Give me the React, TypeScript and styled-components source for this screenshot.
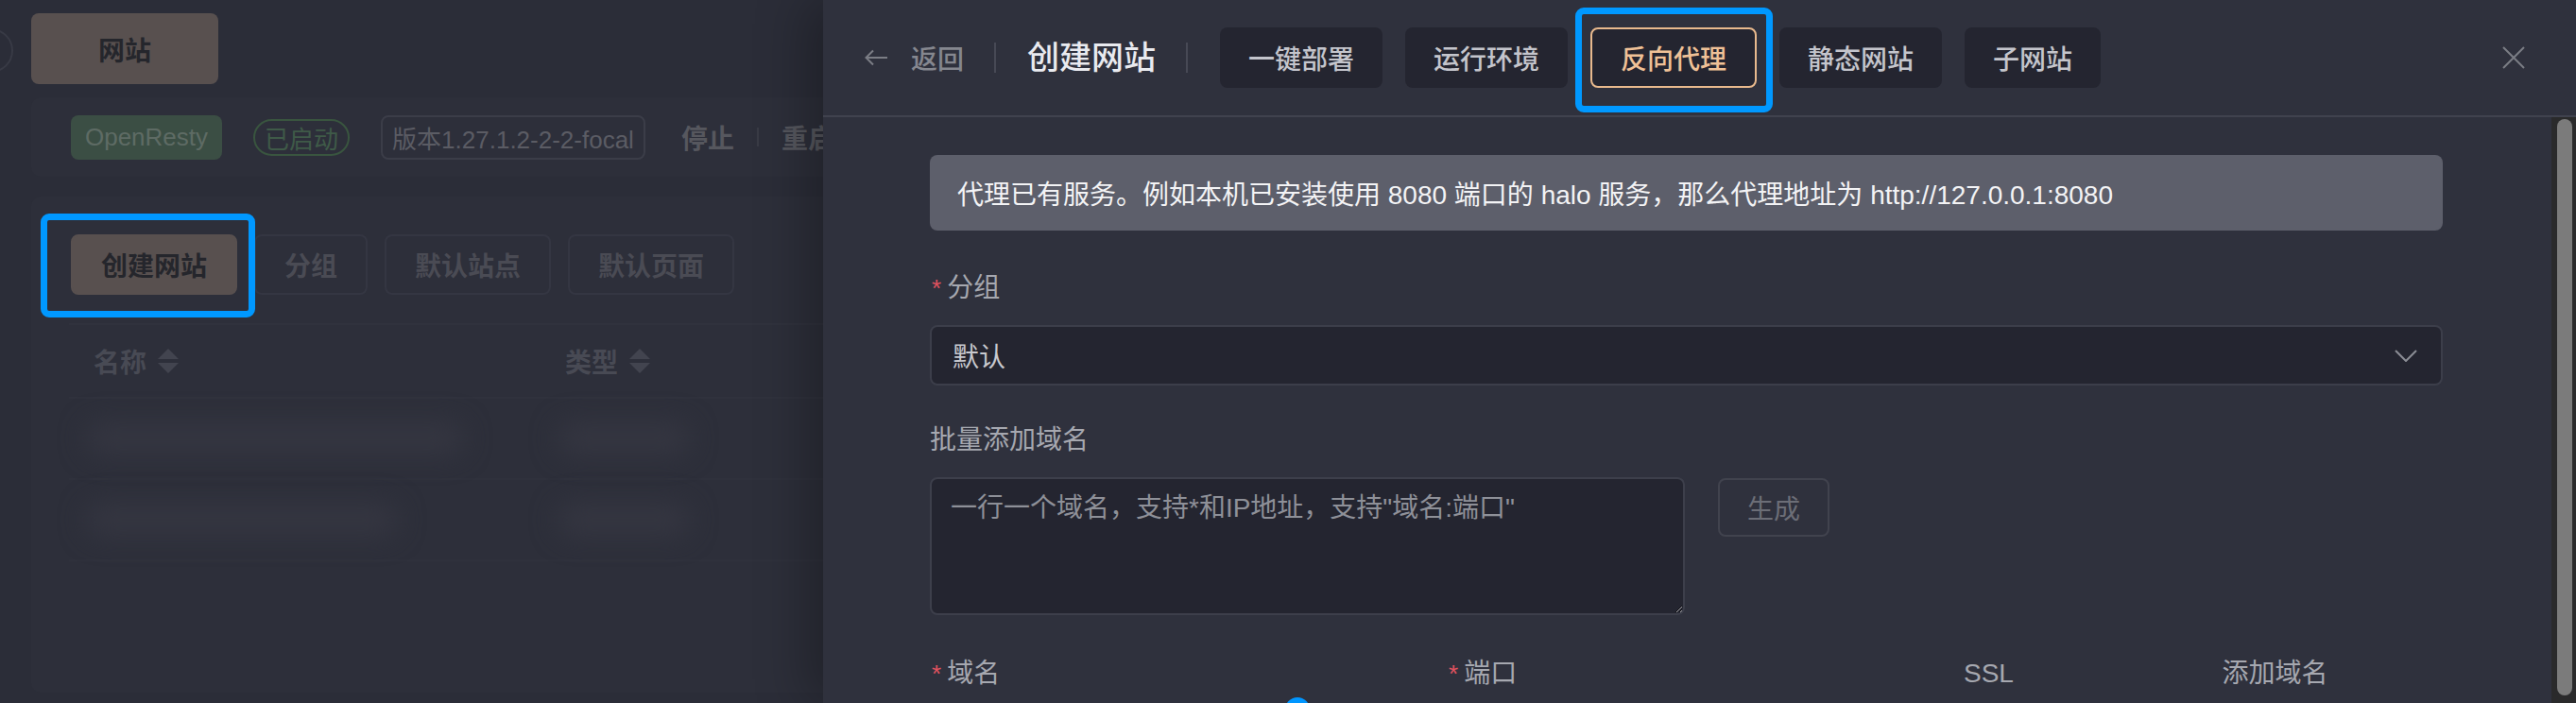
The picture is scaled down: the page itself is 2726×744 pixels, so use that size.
import React from 'react';
import styled, { createGlobalStyle } from 'styled-components';

const GlobalStyle = createGlobalStyle`
  html, body { margin: 0; padding: 0; width: 2726px; height: 744px; overflow: hidden; background: #2b2d38; }
  body { font-family: "Helvetica Neue", Helvetica, "Liberation Sans", "Noto Sans CJK SC", sans-serif; }
  * { box-sizing: border-box; }
`;

const Page = styled.div`
  position: relative;
  width: 2726px;
  height: 744px;
  overflow: hidden;
  background: #2b2d38;
`;

const Main = styled.main`
  display: flex;
  flex-direction: column;
  align-items: flex-start;
  padding: 14px 0 0 33px;
  width: 2700px;
`;

const EdgeToggle = styled.div`
  position: absolute;
  left: -33px;
  top: 30px;
  width: 47px;
  height: 47px;
  border-radius: 50%;
  border: 2px solid #383a45;
`;

const TopButton = styled.div`
  width: 198px;
  height: 75px;
  border-radius: 8px;
  background: #58504f;
  color: #25262c;
  font-size: 28px;
  font-weight: 700;
  display: flex;
  align-items: center;
  justify-content: center;
  margin-bottom: 14px;
`;

const Card = styled.section<{ $h: number; $mb?: number }>`
  width: 2600px;
  height: ${(p) => p.$h}px;
  background: #2d2f3a;
  border-radius: 10px;
  margin-bottom: ${(p) => p.$mb ?? 0}px;
`;

const StatusRow = styled.div`
  display: flex;
  align-items: center;
  height: 100%;
  padding-left: 42px;
  gap: 33px;
`;

const TagGreen = styled.span`
  width: 160px;
  height: 47px;
  border-radius: 8px;
  background: #3b4e44;
  color: #5e6b64;
  font-size: 26px;
  display: flex;
  align-items: center;
  justify-content: center;
`;

const PillTag = styled.span`
  width: 102px;
  height: 39px;
  border-radius: 20px;
  border: 2px solid #39553f;
  color: #3f5a48;
  font-size: 26px;
  display: flex;
  align-items: center;
  justify-content: center;
`;

const OutlineTag = styled.span`
  width: 280px;
  height: 47px;
  border-radius: 8px;
  border: 2px solid #3b3d48;
  color: #5b5c64;
  font-size: 26px;
  display: flex;
  align-items: center;
  justify-content: center;
`;

const TextAction = styled.span`
  font-size: 28px;
  font-weight: 700;
  color: #56575e;
`;

const ActionGroup = styled.div`
  display: flex;
  align-items: center;
  gap: 24px;
  margin-left: 5px;
`;

const SmallDivider = styled.span`
  width: 2px;
  height: 20px;
  background: #393b45;
`;

const ListInner = styled.div`
  padding: 40px 0 0 40px;
  display: flex;
  flex-direction: column;
`;

const ButtonRow = styled.div`
  display: flex;
  gap: 18px;
  padding-left: 2px;
  margin-bottom: 30px;
`;

const PageButton = styled.div<{ $primary?: boolean }>`
  height: 64px;
  padding: 0 30px;
  border-radius: 8px;
  font-size: 28px;
  font-weight: 700;
  display: flex;
  align-items: center;
  background: ${(p) => (p.$primary ? '#58504f' : 'transparent')};
  border: 2px solid ${(p) => (p.$primary ? '#58504f' : '#343642')};
  color: ${(p) => (p.$primary ? '#25262c' : '#4a4b54')};
`;

const Table = styled.div`
  width: 2500px;
  display: grid;
  grid-template-columns: 499px 499px 1fr;
`;

const HeadCell = styled.div`
  height: 80px;
  display: flex;
  align-items: center;
  gap: 12px;
  padding-left: 26px;
  background: #2d2f3a;
  border-top: 2px solid #30323d;
  border-bottom: 2px solid #30323d;
  color: #484a54;
  font-size: 28px;
  font-weight: 700;
`;

const BodyCell = styled.div`
  height: 86px;
  display: flex;
  align-items: center;
  padding-left: 18px;
  border-bottom: 2px solid #2f313c;
`;

const Blob = styled.div<{ $w: number }>`
  width: ${(p) => p.$w}px;
  height: 34px;
  border-radius: 17px;
  background: #353641;
  filter: blur(14px);
`;

const Annotation = styled.div<{ $x: number; $y: number; $w: number; $h: number }>`
  position: absolute;
  left: ${(p) => p.$x}px;
  top: ${(p) => p.$y}px;
  width: ${(p) => p.$w}px;
  height: ${(p) => p.$h}px;
  border: 7px solid #0098ff;
  border-radius: 9px;
  pointer-events: none;
  z-index: 5;
`;

/* Drawer */
const Drawer = styled.aside`
  position: absolute;
  top: 0;
  right: 0;
  width: 1855px;
  height: 744px;
  background: #2f313d;
  box-shadow: -18px 0 50px rgba(0, 0, 0, 0.28);
  display: flex;
  flex-direction: column;
`;

const Header = styled.header`
  height: 124px;
  flex: none;
  display: flex;
  align-items: center;
  padding: 0 54px 0 44px;
  border-bottom: 2px solid #40424e;
`;

const Back = styled.div`
  display: flex;
  align-items: center;
  gap: 25px;
  color: #85878f;
  font-size: 28px;
  font-weight: 500;
`;

const HeadDivider = styled.span<{ $ml: number; $mr: number }>`
  width: 2px;
  height: 32px;
  background: #474955;
  margin: 0 ${(p) => p.$mr}px 0 ${(p) => p.$ml}px;
`;

const Title = styled.h1`
  margin: 0;
  font-size: 34px;
  font-weight: 500;
  color: #e9eaef;
  line-height: 1;
`;

const Tabs = styled.nav`
  display: flex;
  gap: 24px;
`;

const Tab = styled.div<{ $active?: boolean }>`
  height: 64px;
  padding: 0 30px;
  border-radius: 8px;
  background: #242530;
  display: flex;
  align-items: center;
  font-size: 28px;
  font-weight: 500;
  color: ${(p) => (p.$active ? '#efc197' : '#c4c5cc')};
  border: ${(p) => (p.$active ? '2px solid #e8b98d' : 'none')};
`;

const Spacer = styled.div`
  flex: 1;
`;

const CloseBtn = styled.div`
  width: 24px;
  height: 24px;
  display: flex;
`;

const Body = styled.div`
  flex: 1;
  display: flex;
  justify-content: space-between;
  position: relative;
`;

const Content = styled.div`
  width: 1714px;
  padding: 40px 0 0 113px;
`;

const ScrollTrack = styled.div`
  width: 26px;
  background: #2a2a2b;
  padding: 2px 4px 16px 6px;
  display: flex;
`;

const ScrollThumb = styled.div`
  flex: 1;
  border-radius: 8px;
  background: #7b7b7b;
`;

const Alert = styled.div`
  height: 80px;
  border-radius: 8px;
  background: #5d5f6b;
  color: #f3f3f5;
  font-size: 28px;
  display: flex;
  align-items: center;
  padding: 0 29px;
  margin-bottom: 39px;
`;

const FormItem = styled.div<{ $mb: number }>`
  margin-bottom: ${(p) => p.$mb}px;
`;

const Label = styled.div<{ $mb?: number }>`
  height: 44px;
  line-height: 44px;
  font-size: 28px;
  color: #a6a8b0;
  margin-bottom: ${(p) => p.$mb ?? 17}px;
`;

const Star = styled.span`
  color: #e0525f;
  margin-right: 6px;
  margin-left: 2px;
  font-size: 26px;
`;

const Select = styled.div`
  height: 64px;
  border: 2px solid #3c3e4a;
  border-radius: 8px;
  background: #242530;
  display: flex;
  align-items: center;
  justify-content: space-between;
  padding: 0 25px 0 22px;
  color: #c8c9cf;
  font-size: 28px;
`;

const TextRow = styled.div`
  display: flex;
  align-items: flex-start;
  gap: 35px;
`;

const TextArea = styled.textarea`
  width: 799px;
  height: 146px;
  border: 2px solid #3d3f4b;
  border-radius: 8px;
  background: #242530;
  color: #c8c9cf;
  font-family: inherit;
  font-size: 28px;
  line-height: 40px;
  padding: 11px 20px;
  resize: vertical;
  outline: none;
  color-scheme: dark;
  &::placeholder {
    color: #8e9098;
  }
`;

const GenButton = styled.div`
  width: 118px;
  height: 62px;
  border: 2px solid #41434e;
  border-radius: 8px;
  color: #6c6e77;
  font-size: 28px;
  display: flex;
  align-items: center;
  justify-content: center;
  margin-top: 1px;
`;

const ColRow = styled.div`
  display: grid;
  grid-template-columns: 2fr 2fr 1fr 1fr;
  margin: 0 -20px;
`;

const Col = styled.div`
  padding: 0 20px;
`;

const BlueDot = styled.div`
  position: absolute;
  left: 489px;
  top: 614px;
  width: 26px;
  height: 26px;
  border-radius: 50%;
  background: #0096ff;
`;

const Caret = () => (
  <svg width="22" height="26" viewBox="0 0 22 26">
    <path d="M11 0 L22 11 H0 Z" fill="#42444f" />
    <path d="M0 15 H22 L11 26 Z" fill="#42444f" />
  </svg>
);

const ArrowLeft = () => (
  <svg width="24" height="18" viewBox="0 0 24 18" fill="none" stroke="#7b7d85" strokeWidth="2">
    <path d="M24 9 H1.5" />
    <path d="M9 1.5 L1.5 9 L9 16.5" />
  </svg>
);

const CloseIcon = () => (
  <svg width="24" height="24" viewBox="0 0 24 24" fill="none" stroke="#7b7d85" strokeWidth="2">
    <path d="M1 1 L23 23 M23 1 L1 23" />
  </svg>
);

const Chevron = () => (
  <svg width="24" height="13" viewBox="0 0 24 13" fill="none" stroke="#8b8d95" strokeWidth="2">
    <path d="M1 1 L12 12 L23 1" />
  </svg>
);

export default function App() {
  return (
    <Page>
      <GlobalStyle />
      <EdgeToggle />
      <Main>
        <TopButton>网站</TopButton>
        <Card $h={84} $mb={21}>
          <StatusRow>
            <TagGreen>OpenResty</TagGreen>
            <PillTag>已启动</PillTag>
            <OutlineTag>版本1.27.1.2-2-2-focal</OutlineTag>
            <ActionGroup>
              <TextAction>停止</TextAction>
              <SmallDivider />
              <TextAction>重启</TextAction>
            </ActionGroup>
          </StatusRow>
        </Card>
        <Card $h={525}>
          <ListInner>
            <ButtonRow>
              <PageButton $primary>创建网站</PageButton>
              <PageButton>分组</PageButton>
              <PageButton>默认站点</PageButton>
              <PageButton>默认页面</PageButton>
            </ButtonRow>
            <Table>
              <HeadCell>名称 <Caret /></HeadCell>
              <HeadCell>类型 <Caret /></HeadCell>
              <HeadCell />
              <BodyCell><Blob $w={400} /></BodyCell>
              <BodyCell><Blob $w={140} /></BodyCell>
              <BodyCell />
              <BodyCell><Blob $w={330} /></BodyCell>
              <BodyCell><Blob $w={140} /></BodyCell>
              <BodyCell />
            </Table>
          </ListInner>
        </Card>
      </Main>
      <Annotation $x={43} $y={226} $w={227} $h={110} />

      <Drawer>
        <Header>
          <Back>
            <ArrowLeft />
            <span>返回</span>
          </Back>
          <HeadDivider $ml={32} $mr={33} />
          <Title>创建网站</Title>
          <HeadDivider $ml={32} $mr={34} />
          <Tabs>
            <Tab>一键部署</Tab>
            <Tab>运行环境</Tab>
            <Tab $active>反向代理</Tab>
            <Tab>静态网站</Tab>
            <Tab>子网站</Tab>
          </Tabs>
          <Spacer />
          <CloseBtn>
            <CloseIcon />
          </CloseBtn>
        </Header>
        <Body>
          <Content>
            <Alert>代理已有服务。例如本机已安装使用 8080 端口的 halo 服务，那么代理地址为 http://127.0.0.1:8080</Alert>
            <FormItem $mb={36}>
              <Label>
                <Star>*</Star>分组
              </Label>
              <Select>
                <span>默认</span>
                <Chevron />
              </Select>
            </FormItem>
            <FormItem $mb={40}>
              <Label>批量添加域名</Label>
              <TextRow>
                <TextArea placeholder={'一行一个域名，支持*和IP地址，支持"域名:端口"'} />
                <GenButton>生成</GenButton>
              </TextRow>
            </FormItem>
            <ColRow>
              <Col>
                <Label>
                  <Star>*</Star>域名
                </Label>
              </Col>
              <Col>
                <Label>
                  <Star>*</Star>端口
                </Label>
              </Col>
              <Col>
                <Label>SSL</Label>
              </Col>
              <Col>
                <Label>添加域名</Label>
              </Col>
            </ColRow>
          </Content>
          <ScrollTrack>
            <ScrollThumb />
          </ScrollTrack>
          <BlueDot />
        </Body>
      </Drawer>
      <Annotation $x={1667} $y={8} $w={209} $h={111} />
    </Page>
  );
}
